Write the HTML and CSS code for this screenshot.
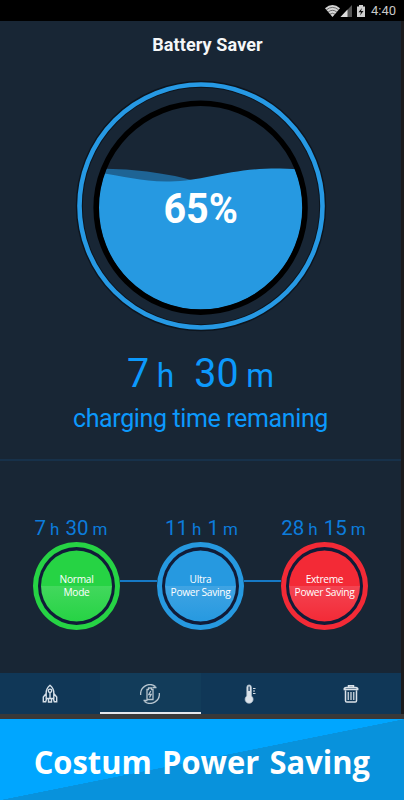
FILE: index.html
```
<!DOCTYPE html>
<html lang="en">
<head>
<meta charset="utf-8">
<title>Battery Saver</title>
<link rel="stylesheet" href="styles.css">
</head>
<body>
<div class="phone">
  <header class="status">
    <svg width="42" height="16" viewBox="0 0 42 16">
      <path d="M0 5.2Q7.5-1.2 15 5.2L7.5 14Z" fill="#d6d6d6"/>
      <path d="M1.4 6.8Q7.5 2 13.6 6.8M3.2 9Q7.500 5.600 11.800 9M5 11.200Q7.500 9.300 10 11.200" fill="none" stroke="#222" stroke-width=".6"/>
      <path d="M27 2V14H15.500Z" fill="#555"/><path d="M22.500 6.500V14H15.500Z" fill="#ddd"/>
      <path d="M32 3.500H34V2H38V3.500H40V14H32Z" fill="#cfcfcf"/>
      <path d="M37 5L33.500 9.300H36L35 12.500L38.500 8H36Z" fill="#111"/>
    </svg>
    <span>4:40</span>
  </header>
  <main class="screen">
    <h1>Battery Saver</h1>
    <div class="gauge">
      <svg width="256" height="256" viewBox="73 78 256 256">
        <defs><clipPath id="tank"><circle cx="200.600" cy="207.700" r="102"/></clipPath></defs>
        <circle cx="201" cy="206" r="121.700" fill="none" stroke="#0d151e" stroke-width="7"/>
        <circle cx="201" cy="206" r="121.500" fill="none" stroke="#2699e4" stroke-width="4.600"/>
        <g clip-path="url(#tank)">
          <path d="M95 169Q120 168 147 171.500T193 180.500L170 190L95 180Z" fill="#1e6495"/>
          <path d="M95 172.500C125 176 140 182 170 181.500C205 181 230 168 280 168.500Q300 169 310 170V320H95Z" fill="#2699e1"/>
        </g>
        <circle cx="200.600" cy="207.700" r="104.400" fill="none" stroke="#000" stroke-width="5.600"/>
      </svg>
      <strong>65%</strong>
    </div>
    <p class="remaining"><b>7</b><i>h</i><b class="minutes">30</b><i>m</i></p>
    <p class="caption">charging time remaning</p>
    <section class="modes">
      <div class="mode normal">
        <p class="time"><b>7</b><i>h</i><b>30</b><i>m</i></p>
        <div class="disc"><span>Normal<br>Mode</span></div>
      </div>
      <div class="link"></div>
      <div class="mode ultra">
        <p class="time"><b>11</b><i>h</i><b>1</b><i>m</i></p>
        <div class="disc"><span>Ultra<br>Power Saving</span></div>
      </div>
      <div class="link"></div>
      <div class="mode extreme">
        <p class="time"><b>28</b><i>h</i><b>15</b><i>m</i></p>
        <div class="disc"><span>Extreme<br>Power Saving</span></div>
      </div>
    </section>
  </main>
  <nav class="tabs">
    <a><svg width="20" height="20" viewBox="0 0 20 20" fill="none" stroke="#d5dfe8" stroke-width="1.400">
      <path d="M10 1.300C7 3.600 6.200 6 6.200 9V14.500H13.800V9C13.800 6 13 3.600 10 1.300ZM6.200 9.500L3.300 13V17.700H5.700L6.700 14.500M13.800 9.500L16.700 13V17.700H14.300L13.300 14.500M8.500 14V18H11.500V14M10 9V14"/><circle cx="10" cy="6.800" r="1.700"/></svg></a>
    <a class="active"><svg width="20" height="20" viewBox="0 0 20 20" fill="none" stroke="#b7c5cf" stroke-width="1.300">
      <path d="M.7 11A9.300 9.300 0 0 1 15.500 2.500M12.500 3.500L16.500 3.500M19.300 9A9.300 9.300 0 0 1 4.500 17.500M7.500 16.500L3.500 16.500M7 5.500H8.500V4H11.500V5.500H13V15.500H7Z"/><path d="M10.800 7L8.800 10.500H11.200L9.500 13.500"/></svg></a>
    <a><svg width="20" height="20" viewBox="-1.500 0 20 20">
      <path d="M4.300 12V3.200A2.300 2.300 0 0 1 8.900 3.200V12A4 4 0 1 1 4.300 12Z" fill="#dce3ea" stroke="#b5c4d1" stroke-width=".7"/>
      <path d="M6.600 2.500V7" stroke="#31516d" stroke-width="1.500"/><path d="M10.500 4.500H13M10.500 7H12.500M10.500 9.500H13" stroke="#d3dce4" stroke-width="1.100"/></svg></a>
    <a><svg width="20" height="20" viewBox="0 0 20 20" fill="none" stroke="#dbe2e9" stroke-width="1.500">
      <path d="M3.300 5.500H16.700V4.500Q16 3.500 14.500 3.500H5.500Q4 3.500 3.300 4.500ZM7.500 3.300V1.700H12.500V3.300M4.500 6.500V16.700Q4.500 18 5.800 18H14.200Q15.500 18 15.500 16.700V6.500"/><path d="M7.300 8V16M10 8V16M12.700 8V16" stroke="#b8c5d0"/></svg></a>
  </nav>
</div>
<footer class="banner"><span>Costum Power Saving</span></footer>
</body>
</html>
```
FILE: styles.css
```
* { box-sizing: border-box; }
body {
  margin: 0;
  width: 404px;
  height: 800px;
  overflow: hidden;
  background: #393939;
  font-family: Roboto, sans-serif;
}
p, h1 { margin: 0; }
b, i { font-weight: 400; font-style: normal; }
.phone {
  height: 714px;
  background: #1b1b1d;
  display: flex;
  flex-direction: column;
}
.status {
  height: 21px;
  background: #000;
  color: #c8c8c8;
  display: flex;
  justify-content: flex-end;
  align-items: center;
  gap: 4px;
  padding-right: 8px;
  font-size: 13px;
}
.screen {
  width: 401px;
  height: 652px;
  background: #182635;
  text-align: center;
}
h1 {
  color: #f5f7f8;
  font-size: 18px;
  line-height: 24px;
  letter-spacing: .1px;
  font-weight: 700;
  padding: 12px 0 0 14px;
  height: 57px;
}
.gauge {
  display: grid;
  width: 256px;
  height: 256px;
  margin-left: 73px;
  place-items: center;
}
.gauge > * { grid-area: 1 / 1; }
.gauge strong {
  color: #fff;
  font-size: 42px;
  line-height: 48px;
  padding-top: 5px;
  transform: scaleX(.94);
  z-index: 1;
}
.remaining, .caption { color: #0c99fc; }
.remaining {
  display: flex;
  justify-content: center;
  align-items: baseline;
  height: 64px;
  padding-top: 14px;
  line-height: 50px;
  transform: scaleX(.96);
}
.remaining b { font-size: 41px; }
.remaining i { font-size: 33px; margin-left: 8px; }
.remaining .minutes { margin-left: 21px; }
.caption {
  height: 63px;
  font-size: 25px;
  line-height: 42px;
  letter-spacing: -.37px;
  border-bottom: 2px solid #17314a;
}
.modes {
  display: flex;
  align-items: flex-start;
  padding: 54px 0 0 33px;
}
.mode { width: 87px; }
.time {
  display: flex;
  justify-content: center;
  align-items: baseline;
  gap: 4px;
  height: 27px;
  line-height: 27px;
  color: #0c7cdb;
  white-space: nowrap;
}
.time b { font-size: 20.500px; }
.time i { font-size: 17px; }
.time b + i { margin-right: 2px; }
.normal .time { padding-right: 9px; }
.ultra .time { padding-left: 4px; }
.disc {
  width: 87px;
  height: 88px;
  border-radius: 50%;
  border: 5px solid var(--c);
  background: #111c38;
  padding: 3px;
}
.disc span {
  display: block;
  height: 72px;
  border-radius: 50%;
  background: linear-gradient(var(--c) 50%, var(--l) 50%, var(--c));
  color: #fff;
  font: 10.200px/13px "Open Sans", sans-serif;
  padding-top: 23px;
  margin: 0 -5px;
  clip-path: circle(35.500px);
  letter-spacing: -.3px;
}
.normal { --c: #26d344; --l: #42d85d; }
.ultra { --c: #2699e0; --l: #40a4e3; }
.extreme { --c: #f32a36; --l: #f34452; }
.link {
  width: 37px;
  height: 2px;
  margin-top: 65px;
  background: #1679c5;
}
.tabs {
  width: 401px;
  height: 41px;
  display: grid;
  grid-template-columns: repeat(4, 1fr);
  background: #103757;
}
.tabs a {
  display: flex;
  justify-content: center;
  align-items: center;
}
.tabs .active {
  background: #123c5a;
  border-bottom: 2px solid #e5e8ed;
  padding-top: 2px;
}
.banner {
  height: 81px;
  margin-top: 5px;
  background: linear-gradient(to bottom right, #00a6ff 50%, #0892dc 50.200%);
  color: #fff;
  font: 700 33px/86px "Open Sans", sans-serif;
  text-align: center;
  white-space: nowrap;
}
.banner span {
  display: inline-block;
  transform: scaleX(.935);
  word-spacing: 2.500px;
}
```
